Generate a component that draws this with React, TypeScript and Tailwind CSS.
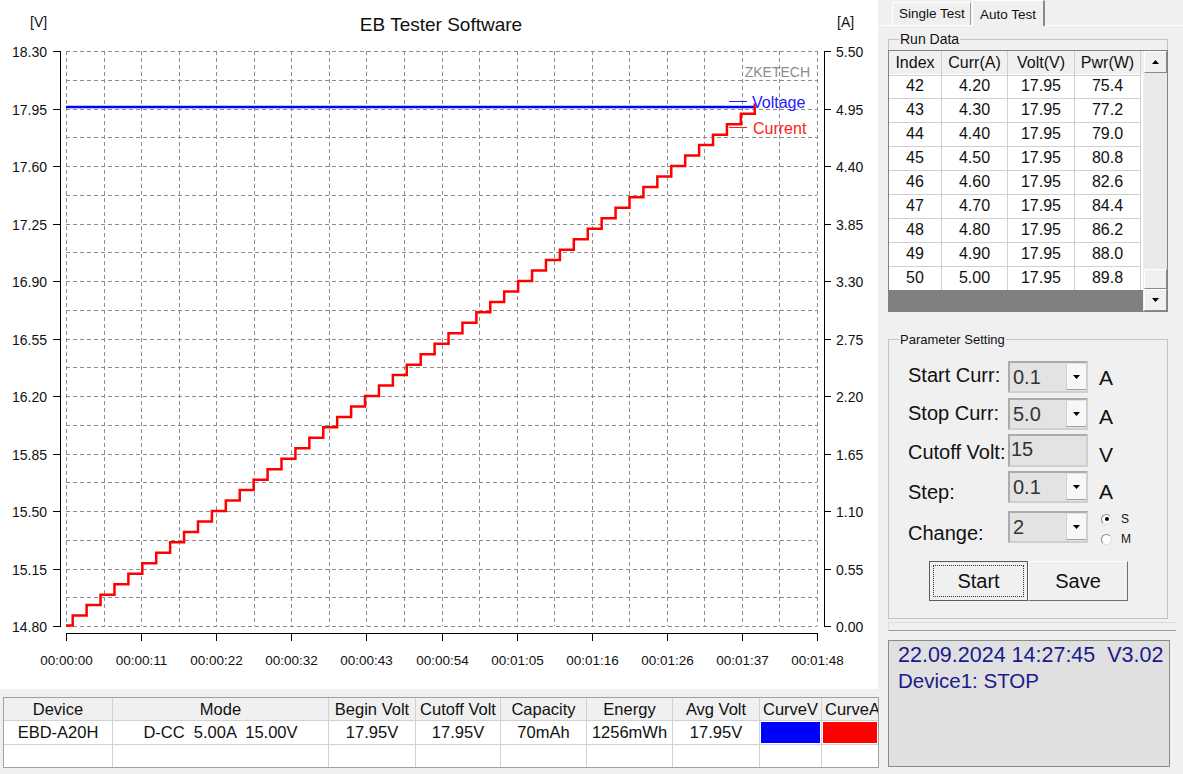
const FONT = "'Liberation Sans', Arial, sans-serif";

// 차트 눈금
const voltTicks = ["18.30", "17.95", "17.60", "17.25", "16.90", "16.55", "16.20", "15.85", "15.50", "15.15", "14.80"];
const currTicks = ["5.50", "4.95", "4.40", "3.85", "3.30", "2.75", "2.20", "1.65", "1.10", "0.55", "0.00"];
const timeTicks = ["00:00:00", "00:00:11", "00:00:22", "00:00:32", "00:00:43", "00:00:54", "00:01:05", "00:01:16", "00:01:26", "00:01:37", "00:01:48"];

const runData = [
  { idx: 42, curr: "4.20", volt: "17.95", pwr: "75.4" },
  { idx: 43, curr: "4.30", volt: "17.95", pwr: "77.2" },
  { idx: 44, curr: "4.40", volt: "17.95", pwr: "79.0" },
  { idx: 45, curr: "4.50", volt: "17.95", pwr: "80.8" },
  { idx: 46, curr: "4.60", volt: "17.95", pwr: "82.6" },
  { idx: 47, curr: "4.70", volt: "17.95", pwr: "84.4" },
  { idx: 48, curr: "4.80", volt: "17.95", pwr: "86.2" },
  { idx: 49, curr: "4.90", volt: "17.95", pwr: "88.0" },
  { idx: 50, curr: "5.00", volt: "17.95", pwr: "89.8" },
];

const PX0 = 66;
const PX1 = 817;
const PY0 = 51;
const PY1 = 626;
const GX = (PX1 - PX0) / 20;
const GY = (PY1 - PY0) / 20;

function currentPath() {
  const yOf = (a: number) => PY1 - (a * (PY1 - PY0)) / 5.5;
  const w = 13.92;
  const x0 = 72.7;
  let d = `M ${PX0} ${PY1 - 0.5} L ${x0} ${PY1 - 0.5}`;
  for (let i = 1; i <= 49; i++) {
    const x = x0 + (i - 1) * w;
    d += ` L ${x} ${yOf(i / 10)} L ${x + w} ${yOf(i / 10)}`;
  }
  d += ` L ${x0 + 49 * w} ${yOf(5.0)}`;
  return d;
}

function Chart() {
  const half = (v: number) => Math.round(v) + 0.5;
  return (
    <svg width="878" height="689" viewBox="0 0 878 689" fontFamily={FONT}>
      {/* 격자 */}
      {Array.from({ length: 21 }).map((_, k) => (
        <line key={"h" + k} x1={PX0} x2={PX1} y1={half(PY0 + k * GY)} y2={half(PY0 + k * GY)} stroke="#8c8c8c" strokeDasharray="4 3" />
      ))}
      {Array.from({ length: 21 }).map((_, k) => (
        <line key={"v" + k} x1={half(PX0 + k * GX)} x2={half(PX0 + k * GX)} y1={PY0} y2={PY1} stroke="#8c8c8c" strokeDasharray="4 3" />
      ))}

      {/* 좌측 축 */}
      <line x1="60.5" x2="60.5" y1={PY0} y2={PY1 + 1} stroke="#000" />
      {voltTicks.map((t, k) => {
        const y = half(PY0 + k * GY * 2);
        return (
          <g key={t}>
            <line x1="53" x2="60" y1={y} y2={y} stroke="#000" />
            <text x="47" y={y + 5} fontSize="14" textAnchor="end" fill="#111">{t}</text>
          </g>
        );
      })}

      {/* 우측 축 */}
      <line x1="824.5" x2="824.5" y1={PY0} y2={PY1 + 1} stroke="#000" />
      {currTicks.map((t, k) => {
        const y = half(PY0 + k * GY * 2);
        return (
          <g key={t}>
            <line x1="824" x2="831" y1={y} y2={y} stroke="#000" />
            <text x="836" y={y + 5} fontSize="14" fill="#111">{t}</text>
          </g>
        );
      })}

      {/* 하단 시간축 */}
      <line x1={PX0} x2={PX1 + 1} y1="633.5" y2="633.5" stroke="#000" />
      {timeTicks.map((t, k) => {
        const x = half(PX0 + k * GX * 2);
        return (
          <g key={t}>
            <line x1={x} x2={x} y1="633" y2="641" stroke="#000" />
            <text x={x} y="665" fontSize="13.5" textAnchor="middle" fill="#111">{t}</text>
          </g>
        );
      })}

      <text x="441" y="31" fontSize="19" textAnchor="middle" fill="#111">EB Tester Software</text>
      <text x="30" y="27" fontSize="14" fill="#111">[V]</text>
      <text x="837" y="27" fontSize="14" fill="#111">[A]</text>

      {/* 데이터 */}
      <line x1={PX0} x2="754" y1="107" y2="107" stroke="#0000ff" strokeWidth="2.5" />
      <path d={currentPath()} fill="none" stroke="#ff0000" strokeWidth="2.5" />

      {/* 범례 */}
      <text x="810" y="77" fontSize="14" textAnchor="end" fill="#8c8c8c">ZKETECH</text>
      <line x1="729" x2="747" y1="101.5" y2="101.5" stroke="#2020ff" />
      <text x="752" y="108" fontSize="16" fill="#2020ff">Voltage</text>
      <line x1="729" x2="747" y1="127.5" y2="127.5" stroke="#ff2020" />
      <text x="753" y="134" fontSize="16" fill="#ff2020">Current</text>
    </svg>
  );
}

function BottomTable() {
  const headers = ["Device", "Mode", "Begin Volt", "Cutoff Volt", "Capacity", "Energy", "Avg Volt", "CurveV", "CurveA"];
  const values = ["EBD-A20H", "D-CC  5.00A  15.00V", "17.95V", "17.95V", "70mAh", "1256mWh", "17.95V"];
  const cell = "flex items-center justify-center whitespace-pre overflow-hidden border-r border-b border-[#d2d2d2]";
  return (
    <div className="ml-[3px] mt-[8px] w-[876px] border border-[#a0a0a0] overflow-hidden bg-white">
      <div className="grid grid-cols-[109px_216px_87px_85px_86px_86px_87px_62px_56px] text-[16.5px] text-[#111]">
        {headers.map((h, i) => (
          <div key={h} className={`${cell} h-[23px] bg-[#f0f0f0] ${i === 8 ? "justify-start pl-[3px] border-r-0" : ""}`}>{h}</div>
        ))}
        {values.map((v, i) => (
          <div key={i} className={`${cell} h-[24px]`}>{v}</div>
        ))}
        <div className={`${cell} h-[24px] p-[1px]`}><div className="w-full h-full bg-[#0000ff]" /></div>
        <div className={`${cell} h-[24px] border-r-0 p-[1px]`}><div className="w-full h-full bg-[#ff0000]" /></div>
        {headers.map((h, i) => (
          <div key={"e" + h} className={`${cell} h-[22px] border-b-0 ${i === 8 ? "border-r-0" : ""}`} />
        ))}
      </div>
    </div>
  );
}

function Arrow({ up }: { up?: boolean }) {
  return (
    <svg width="7" height="4" viewBox="0 0 7 4">
      <polygon points={up ? "0,4 3.5,0 7,4" : "0,0 7,0 3.5,4"} fill="#000" />
    </svg>
  );
}

function RunData() {
  const cols = "grid grid-cols-[53px_66px_67px_66px]";
  return (
    <div className="relative ml-[9px] mt-[13px] w-[280px] h-[273px] border border-[#c4c4c4] border-b-0">
      <span className="absolute -top-[9px] left-[10px] bg-[#f0f0f0] px-[1px] text-[14px] leading-[16px] text-[#111]">Run Data</span>
      <div className="mt-[10px] -ml-px w-[280px] h-[262px] border border-[#828282] flex">
        <div className="w-[254px] flex flex-col bg-white">
          <div className={`${cols} h-[23px] bg-[#f0f0f0] text-[16px] text-[#111]`}>
            {["Index", "Curr(A)", "Volt(V)", "Pwr(W)"].map((h) => (
              <div key={h} className="flex items-center justify-center border-r border-b border-[#d0d0d0]">{h}</div>
            ))}
          </div>
          {runData.map((r) => (
            <div key={r.idx} className={`${cols} h-[24px] text-[16px] text-[#111]`}>
              <div className="flex items-center justify-center border-r border-b border-[#d0d0d0]">{r.idx}</div>
              <div className="flex items-center justify-center border-r border-b border-[#d0d0d0]">{r.curr}</div>
              <div className="flex items-center justify-center border-r border-b border-[#d0d0d0]">{r.volt}</div>
              <div className="flex items-center justify-center border-r border-b border-[#d0d0d0]">{r.pwr}</div>
            </div>
          ))}
          <div className="flex-1 bg-[#808080]" />
        </div>
        <div className="w-[24px] flex flex-col bg-[#f0f0f0] pl-[1px]">
          <div className="h-[22px] flex items-center justify-center bg-[#f0f0f0] border border-[#ffffff] border-r-[#8a8a8a] border-b-[#8a8a8a]"><Arrow up /></div>
          <div className="flex-1 flex flex-col justify-end bg-[#e9e9e9]">
            <div className="h-[20px] bg-[#f0f0f0] border border-[#ffffff] border-r-[#8a8a8a] border-b-[#8a8a8a]" />
          </div>
          <div className="h-[22px] flex items-center justify-center bg-[#f0f0f0] border border-[#ffffff] border-r-[#8a8a8a] border-b-[#8a8a8a]"><Arrow /></div>
        </div>
      </div>
    </div>
  );
}

function Combo({ value }: { value: string }) {
  return (
    <div className="w-[80px] h-[32px] flex bg-[#e3e3e3] border-2 border-[#ababab] border-b-[#cfcfcf] border-r-[#cfcfcf]">
      <span className="flex-1 pl-[3px] text-[20px] leading-[28px] text-[#333]">{value}</span>
      <div className="w-[20px] my-[1px] flex items-center justify-center bg-[#f7f7f7] border-l border-[#d0d0d0] border-b border-b-[#a0a0a0]">
        <Arrow />
      </div>
    </div>
  );
}

function ParamRow({ label, children, unit, rowClass, labelPt }: { label: string; children: React.ReactNode; unit?: React.ReactNode; rowClass: string; labelPt: string }) {
  return (
    <div className={`flex items-start ${rowClass}`}>
      <span className={`w-[100px] whitespace-nowrap text-[20px] leading-[28px] text-[#111] ${labelPt}`}>{label}</span>
      {children}
      {unit}
    </div>
  );
}

function Unit({ ch, pt }: { ch: string; pt: string }) {
  return <span className={`ml-[11px] text-[21px] leading-[28px] text-[#111] ${pt}`}>{ch}</span>;
}

function Radio({ checked, label }: { checked?: boolean; label: string }) {
  return (
    <div className="flex items-center h-[20px]">
      <div className="w-[11px] h-[11px] rounded-full border border-[#8a8a8a] border-b-[#e0e0e0] border-r-[#e0e0e0] bg-white flex items-center justify-center">
        {checked && <div className="w-[4px] h-[4px] rounded-full bg-black" />}
      </div>
      <span className="ml-[9px] text-[12px] text-[#111]">{label}</span>
    </div>
  );
}

function ParameterSetting() {
  return (
    <div className="relative ml-[9px] mt-[27px] w-[280px] h-[280px] border border-[#c4c4c4] pl-[19px]">
      <span className="absolute -top-[8px] left-[10px] bg-[#f0f0f0] px-[1px] text-[13px] leading-[15px] text-[#111]">Parameter Setting</span>
      <ParamRow label="Start Curr:" rowClass="mt-[21px] h-[32px]" labelPt="pt-0" unit={<Unit ch="A" pt="pt-[3px]" />}>
        <Combo value="0.1" />
      </ParamRow>
      <ParamRow label="Stop Curr:" rowClass="mt-[5px] h-[32px]" labelPt="pt-[1px]" unit={<Unit ch="A" pt="pt-[5px]" />}>
        <Combo value="5.0" />
      </ParamRow>
      <ParamRow label="Cutoff Volt:" rowClass="mt-[4px] h-[33px]" labelPt="pt-[4px]" unit={<Unit ch="V" pt="pt-[7px]" />}>
        <div className="w-[80px] h-[33px] bg-[#e3e3e3] border-2 border-[#ababab] border-b-[#cfcfcf] border-r-[#cfcfcf]">
          <span className="pl-[1px] text-[20px] leading-[26px] text-[#333]">15</span>
        </div>
      </ParamRow>
      <ParamRow label="Step:" rowClass="mt-[4px] h-[33px]" labelPt="pt-[7px]" unit={<Unit ch="A" pt="pt-[7px]" />}>
        <Combo value="0.1" />
      </ParamRow>
      <ParamRow
        label="Change:"
        rowClass="mt-[7px] h-[32px]"
        labelPt="pt-[8px]"
        unit={
          <div className="ml-[13px] -mt-[2px] flex flex-col">
            <Radio checked label="S" />
            <Radio label="M" />
          </div>
        }
      >
        <Combo value="2" />
      </ParamRow>
      <div className="mt-[18px] ml-[21px] flex">
        <div className="w-[99px] h-[40px] bg-[#f0f0f0] border border-[#5a5a5a] p-[3px]">
          <div className="w-full h-full border border-dotted border-[#333] flex items-center justify-center text-[20px] text-[#111]">Start</div>
        </div>
        <div className="w-[100px] h-[40px] bg-[#f0f0f0] border border-[#ffffff] border-r-[#6e6e6e] border-b-[#6e6e6e] flex items-center justify-center text-[20px] text-[#111]">Save</div>
      </div>
    </div>
  );
}

function Tabs() {
  return (
    <div className="h-[26px] flex items-end pl-[13px] border-b border-[#ffffff]">
      <div className="w-[79px] h-[23px] flex items-center pl-[6px] text-[13.5px] text-[#111] border border-b-0 border-[#ffffff] border-r-[#a0a0a0]">Single Test</div>
      <div className="w-[73px] h-[26px] -mb-px ml-[1px] flex items-start pt-[4px] pl-[7px] text-[13.5px] text-[#111] bg-[#f0f0f0] border-l border-t border-[#ffffff] border-r-2 border-r-[#8a8a8a]">Auto Test</div>
    </div>
  );
}

export default function App() {
  return (
    <div className="w-[1183px] h-[774px] bg-[#f0f0f0] flex overflow-hidden font-['Liberation_Sans',Arial,sans-serif]">
      <div className="w-[879px] flex flex-col shrink-0">
        <div className="w-[878px] h-[689px] bg-white">
          <Chart />
        </div>
        <BottomTable />
      </div>

      <div className="w-[304px] flex flex-col shrink-0">
        <Tabs />
        <RunData />
        <ParameterSetting />
        {/* 구분선 */}
        <div className="ml-[9px] mt-[3px] w-[288px] h-[9px] border-t border-l border-[#dcdcdc] border-b border-b-[#9a9a9a]" />
        <div className="ml-[9px] mt-[9px] w-[282px] h-[127px] bg-[#e0e0e0] border border-[#8a8a8a] overflow-hidden pl-[9px] pt-[1px]">
          <div className="whitespace-pre text-[21.5px] leading-[26px] text-[#1a1a8c]">22.09.2024 14:27:45  V3.02</div>
          <div className="whitespace-pre text-[20.5px] leading-[26px] text-[#1a1a8c]">Device1: STOP</div>
        </div>
      </div>
    </div>
  );
}
